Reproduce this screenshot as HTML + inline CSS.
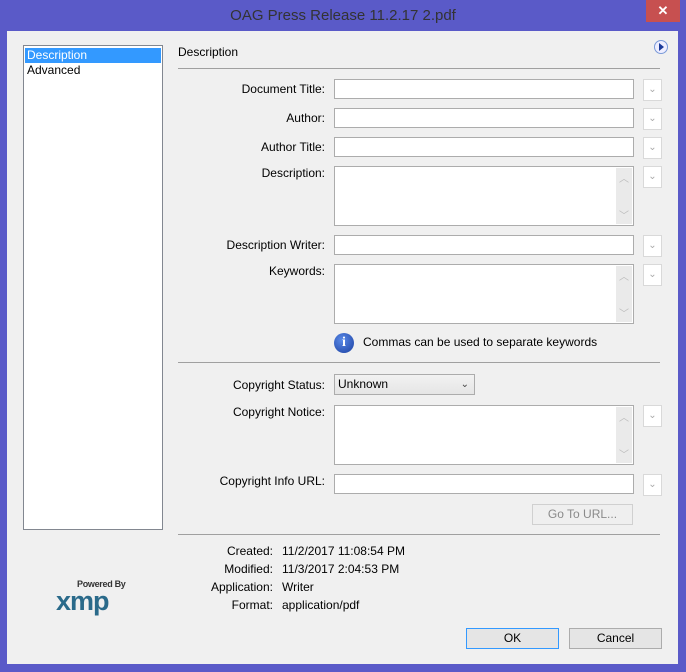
<!DOCTYPE html><html><head><style>
*{margin:0;padding:0;box-sizing:border-box}
body{width:686px;height:672px;background:#5a5ac8;font-family:"Liberation Sans",sans-serif;font-size:12px;color:#000;position:relative;overflow:hidden}
.a{position:absolute}
#title{left:0;top:0;width:686px;height:31px;text-align:center;line-height:31px;font-size:15px;color:#333}
#close{left:646px;top:0;width:34px;height:22px;background:#c75050;color:#fff;text-align:center;line-height:22px;font-size:13px;font-weight:bold}
#client{left:7px;top:31px;width:671px;height:633px;background:#f0f0f0}
.lab{position:absolute;right:361px;text-align:right;white-space:nowrap}
.ml{position:absolute;right:413px;text-align:right;white-space:nowrap}
.in{position:absolute;left:334px;width:300px;height:20px;background:#fff;border:1px solid #acacac}
.ta{height:60px}
.sb{position:absolute;right:1px;top:1px;bottom:1px;width:16px;background:#eaeaea;color:#bbb;font-size:10px;text-align:center}
.sb .u{position:absolute;top:2px;left:0;width:16px}
.sb .d{position:absolute;bottom:2px;left:0;width:16px}
.dd{position:absolute;left:643px;width:19px;height:22px;border:1px solid #d9d9d9;background:#fff;color:#aaa;font-size:10px;text-align:center;line-height:20px}
.hr{position:absolute;left:178px;width:482px;height:1px;background:#a0a0a0}
.btn{position:absolute;height:21px;border:1px solid #acacac;background:#e5e5e5;text-align:center;line-height:19px}
</style></head><body>
<div class="a" id="title">OAG Press Release 11.2.17 2.pdf</div>
<div class="a" id="close">✕</div>
<div class="a" id="client"></div>
<div class="a" style="left:23px;top:45px;width:140px;height:485px;background:#fff;border:1px solid #828790"></div>
<div class="a" style="left:25px;top:48px;width:136px;height:15px;background:#3399ff;color:#fff;padding-left:2px;line-height:15px">Description</div>
<div class="a" style="left:27px;top:63px;line-height:15px">Advanced</div>
<div class="a" style="left:178px;top:45px">Description</div>
<div class="a" style="left:654px;top:40px;width:14px;height:14px;border-radius:50%;border:1px solid #7a9ad8;background:#eef;"><div class="a" style="left:4px;top:2px;width:0;height:0;border-left:5px solid #1a3a9a;border-top:4px solid transparent;border-bottom:4px solid transparent"></div></div>
<div class="hr" style="top:68px"></div>

<div class="lab" style="top:82px">Document Title:</div><div class="in" style="top:79px"></div><div class="dd" style="top:79px">⌄</div>
<div class="lab" style="top:111px">Author:</div><div class="in" style="top:108px"></div><div class="dd" style="top:108px">⌄</div>
<div class="lab" style="top:140px">Author Title:</div><div class="in" style="top:137px"></div><div class="dd" style="top:137px">⌄</div>
<div class="lab" style="top:166px">Description:</div><div class="in ta" style="top:166px"><div class="sb"><span class="u">︿</span><span class="d">﹀</span></div></div><div class="dd" style="top:166px">⌄</div>
<div class="lab" style="top:238px">Description Writer:</div><div class="in" style="top:235px"></div><div class="dd" style="top:235px">⌄</div>
<div class="lab" style="top:264px">Keywords:</div><div class="in ta" style="top:264px"><div class="sb"><span class="u">︿</span><span class="d">﹀</span></div></div><div class="dd" style="top:264px">⌄</div>
<div class="a" style="left:334px;top:333px;width:20px;height:20px;border-radius:50%;background:radial-gradient(circle at 40% 35%,#5a8ae8,#1a3fa0);color:#fff;font-weight:bold;font-family:'Liberation Serif',serif;font-size:14px;text-align:center;line-height:20px">i</div>
<div class="a" style="left:363px;top:335px">Commas can be used to separate keywords</div>
<div class="hr" style="top:362px"></div>

<div class="lab" style="top:378px">Copyright Status:</div>
<div class="a" style="left:334px;top:374px;width:141px;height:21px;border:1px solid #acacac;background:linear-gradient(#f2f2f2,#e5e5e5);padding-left:3px;line-height:19px">Unknown<span style="position:absolute;right:5px;top:0;font-size:10px;color:#444">⌄</span></div>
<div class="lab" style="top:405px">Copyright Notice:</div><div class="in ta" style="top:405px"><div class="sb"><span class="u">︿</span><span class="d">﹀</span></div></div><div class="dd" style="top:405px">⌄</div>
<div class="lab" style="top:474px">Copyright Info URL:</div><div class="in" style="top:474px"></div><div class="dd" style="top:474px">⌄</div>
<div class="btn" style="left:532px;top:504px;width:101px;color:#8a8a8a;background:#efefef;border-color:#d0d0d0">Go To URL...</div>
<div class="hr" style="top:534px"></div>

<div class="ml" style="top:544px">Created:</div><div class="a" style="left:282px;top:544px">11/2/2017 11:08:54 PM</div>
<div class="ml" style="top:562px">Modified:</div><div class="a" style="left:282px;top:562px">11/3/2017 2:04:53 PM</div>
<div class="ml" style="top:580px">Application:</div><div class="a" style="left:282px;top:580px">Writer</div>
<div class="ml" style="top:598px">Format:</div><div class="a" style="left:282px;top:598px">application/pdf</div>
<div class="a" style="left:77px;top:579px;font-size:9px;font-weight:bold;color:#333;letter-spacing:-0.3px">Powered By</div>
<div class="a" style="left:56px;top:586px;font-size:27px;font-weight:bold;color:#2a6a8a;letter-spacing:-1px">xmp</div>
<div class="btn" style="left:466px;top:628px;width:93px;border-color:#3399ff;background:#e5e5e5">OK</div>
<div class="btn" style="left:569px;top:628px;width:93px">Cancel</div>
</body></html>
